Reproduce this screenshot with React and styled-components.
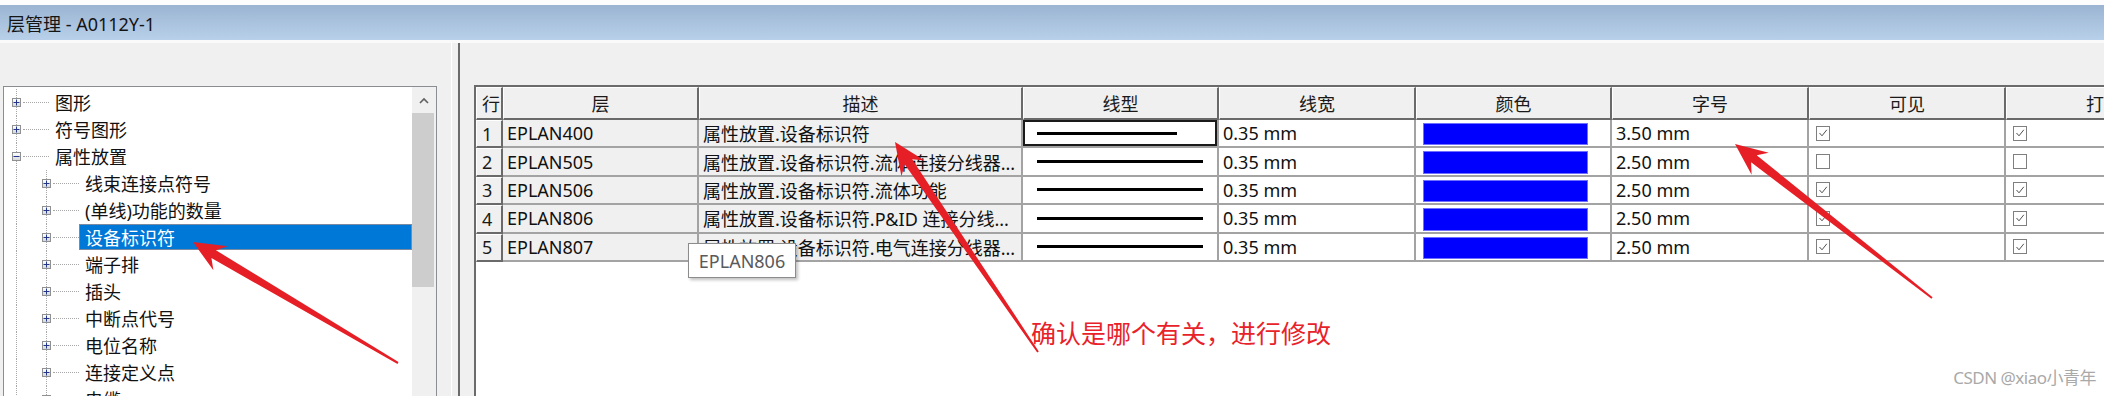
import React from "react";
import styled, { createGlobalStyle } from "styled-components";

const GlobalStyle = createGlobalStyle`
  html, body {
    margin: 0;
    padding: 0;
    background: #f0f0f0;
  }
  body {
    overflow: hidden;
    font-family: "Noto Sans", "Noto Sans CJK SC", sans-serif;
  }
  * {
    box-sizing: border-box;
  }
`;

const Window = styled.div`
  position: relative;
  width: 2104px;
  height: 396px;
  overflow: hidden;
  display: flex;
  flex-direction: column;
  background: #f0f0f0;
  font-family: "Noto Sans", "Noto Sans CJK SC", sans-serif;
  color: #111;
`;

const TopStrip = styled.div`
  flex: none;
  height: 5px;
  background: #fdfdfd;
`;

const TitleBar = styled.div`
  flex: none;
  height: 35px;
  display: flex;
  align-items: center;
  padding-left: 7px;
  background: linear-gradient(#9bb4d2, #b8d0e9);
  font-size: 18px;
  color: #141414;
`;

const TitleGap = styled.div`
  flex: none;
  height: 3px;
  background: #fafafa;
`;

const Body = styled.div`
  flex: 1;
  min-height: 0;
  display: flex;
  overflow: hidden;
`;

const LeftPane = styled.div`
  flex: none;
  width: 452px;
  padding: 43px 14px 0 3px;
  border-right: 1px solid #ffffff;
  overflow: hidden;
`;

const TreeBox = styled.div`
  height: 340px;
  display: flex;
  background: #fff;
  border: 1px solid #8a8d92;
`;

const TreeList = styled.div`
  flex: 1;
  padding-top: 2px;
  overflow: hidden;
`;

const TreeRow = styled.div`
  height: 27px;
  display: flex;
  align-items: stretch;
`;

const Indent = styled.div`
  flex: none;
  width: 30px;
  position: relative;
  &::before {
    content: "";
    position: absolute;
    left: 12px;
    top: 0;
    bottom: 0;
    border-left: 1px dotted #a8a8a8;
  }
`;

const Expander = styled.div`
  flex: none;
  width: 45px;
  position: relative;
  display: flex;
  align-items: center;
  padding-left: 8px;
  &::before {
    content: "";
    position: absolute;
    left: 12px;
    top: 0;
    bottom: 0;
    border-left: 1px dotted #a8a8a8;
  }
`;

const ToggleBox = styled.span`
  position: relative;
  z-index: 1;
  flex: none;
  width: 9px;
  height: 9px;
  border: 1px solid #8f9092;
  background: linear-gradient(#ffffff, #d6d8dc);
  display: flex;
  align-items: center;
  justify-content: center;
`;

const Connector = styled.span`
  flex: 1;
  margin-left: 2px;
  border-top: 1px dotted #a8a8a8;
`;

const TreeLabel = styled.div`
  flex: 1;
  display: flex;
  align-items: center;
  padding: 0 5px;
  margin: 0 0 1px;
  font-size: 18px;
  white-space: nowrap;
  color: ${(p) => (p.$selected ? "#fff" : "#111")};
  background: ${(p) => (p.$selected ? "#0078d7" : "transparent")};
  border: 1px ${(p) => (p.$selected ? "solid #7a8aa0" : "solid transparent")};
`;

const ScrollBar = styled.div`
  flex: none;
  width: 24px;
  display: flex;
  flex-direction: column;
  background: #f0f0f0;
`;

const ScrollButton = styled.div`
  height: 26px;
  display: flex;
  align-items: center;
  justify-content: center;
`;

const ScrollThumb = styled.div`
  height: 174px;
  margin: 0 2px 0 0;
  background: #cdcdcd;
`;

const Splitter = styled.div`
  flex: none;
  width: 8px;
  border-right: 2px solid #6b6b6b;
`;

const RightPane = styled.div`
  flex: 1;
  min-width: 0;
  padding: 42px 0 0 14px;
  overflow: hidden;
`;

const TableBox = styled.div`
  height: 340px;
  background: #fff;
  border-top: 2px solid #6b6b6b;
  border-left: 2px solid #6b6b6b;
  overflow: hidden;
`;

const Grid = styled.div`
  display: grid;
  grid-template-columns: 27px 196px 324px 196px 197px 196px 197px 197px 197px;
  grid-template-rows: 33px repeat(5, 28.4px);
  width: max-content;
  font-size: 18px;
`;

const HeadCell = styled.div`
  display: flex;
  align-items: center;
  justify-content: ${(p) => (p.$left ? "flex-start" : "center")};
  padding-left: ${(p) => (p.$left ? "5px" : "0")};
  background: #f0f0f0;
  border-top: 1px solid #fff;
  border-left: 1px solid #fff;
  border-right: 2px solid #6a6a6a;
  border-bottom: 2px solid #6a6a6a;
  color: #1a1a1a;
  white-space: nowrap;
  overflow: hidden;
`;

const Cell = styled.div`
  display: flex;
  align-items: center;
  padding-left: ${(p) => p.$pad || "4px"};
  background: ${(p) => (p.$shaded ? "#f0f0f0" : "#fff")};
  border-right: 2px solid #a3a3a3;
  border-bottom: 2px solid #a3a3a3;
  white-space: nowrap;
  overflow: hidden;
  color: #111;
  box-shadow: ${(p) => (p.$focused ? "inset 0 0 0 2px #1a1a1a" : "none")};
`;

const LineSample = styled.div`
  height: 3px;
  background: #000;
  width: ${(p) => p.$w}px;
`;

const SwatchCell = styled.div`
  display: flex;
  padding: 3px 22px 1px 7px;
  border-right: 2px solid #a3a3a3;
  border-bottom: 2px solid #a3a3a3;
`;

const Swatch = styled.div`
  flex: 1;
  background: #0000ff;
  border: 1px solid #6f6fff;
`;

const CheckBox = styled.span`
  width: 14px;
  height: 15px;
  border: 1px solid #7f7f7f;
  background: #fff;
  display: flex;
  align-items: center;
  justify-content: center;
`;

const Tooltip = styled.div`
  position: absolute;
  left: 688px;
  top: 243px;
  width: 108px;
  height: 35px;
  display: flex;
  align-items: center;
  justify-content: center;
  background: #fff;
  border: 1px solid #8c8c8c;
  box-shadow: 2px 2px 3px rgba(0, 0, 0, 0.25);
  font-size: 18px;
  color: #5a5a5a;
`;

const Overlay = styled.svg`
  position: absolute;
  left: 0;
  top: 0;
  pointer-events: none;
`;

const Note = styled.div`
  position: absolute;
  left: 1031px;
  top: 318px;
  font-size: 25px;
  line-height: 30px;
  color: #e8222a;
  white-space: nowrap;
`;

const Watermark = styled.div`
  position: absolute;
  right: 8px;
  bottom: 7px;
  font-size: 17px;
  color: #a9a9a9;
  letter-spacing: -0.5px;
  white-space: nowrap;
`;

const tree = [
  { label: "图形", level: 0, open: false },
  { label: "符号图形", level: 0, open: false },
  { label: "属性放置", level: 0, open: true },
  { label: "线束连接点符号", level: 1 },
  { label: "(单线)功能的数量", level: 1 },
  { label: "设备标识符", level: 1, selected: true },
  { label: "端子排", level: 1 },
  { label: "插头", level: 1 },
  { label: "中断点代号", level: 1 },
  { label: "电位名称", level: 1 },
  { label: "连接定义点", level: 1 },
  { label: "电缆", level: 1 },
];

const headers = ["行", "层", "描述", "线型", "线宽", "颜色", "字号", "可见", "打印"];

const rows = [
  { layer: "EPLAN400", desc: "属性放置.设备标识符", size: "3.50 mm", visible: true },
  { layer: "EPLAN505", desc: "属性放置.设备标识符.流体连接分线器...", size: "2.50 mm", visible: false },
  { layer: "EPLAN506", desc: "属性放置.设备标识符.流体功能", size: "2.50 mm", visible: true },
  { layer: "EPLAN806", desc: "属性放置.设备标识符.P&ID 连接分线...", size: "2.50 mm", visible: true },
  { layer: "EPLAN807", desc: "属性放置.设备标识符.电气连接分线器...", size: "2.50 mm", visible: true },
];

const Toggle = ({ open }) => (
  <ToggleBox>
    <svg width="7" height="7" viewBox="0 0 7 7">
      <line x1="0.5" y1="3.5" x2="6.5" y2="3.5" stroke="#23378a" strokeWidth="1" />
      {!open && <line x1="3.5" y1="0.5" x2="3.5" y2="6.5" stroke="#23378a" strokeWidth="1" />}
    </svg>
  </ToggleBox>
);

const Check = ({ on }) => (
  <CheckBox>
    {on && (
      <svg width="10" height="10" viewBox="0 0 10 10">
        <polyline points="1.5,5 4,7.8 8.8,1.8" fill="none" stroke="#505050" strokeWidth="1" />
      </svg>
    )}
  </CheckBox>
);

// red annotation arrow: tapered shaft, swept head
const arrowPoints = (tip, tail, headLen, headHalf) => {
  const dx = tail[0] - tip[0];
  const dy = tail[1] - tip[1];
  const len = Math.hypot(dx, dy);
  const d = [dx / len, dy / len];
  const p = [-d[1], d[0]];
  const at = (t, s) => [tip[0] + d[0] * t + p[0] * s, tip[1] + d[1] * t + p[1] * s];
  const neck = headLen - 8;
  const pts = [
    tip,
    at(headLen, headHalf),
    at(neck, 4.5),
    [tail[0] + p[0] * 1, tail[1] + p[1] * 1],
    [tail[0] - p[0] * 1, tail[1] - p[1] * 1],
    at(neck, -4.5),
    at(headLen, -headHalf),
  ];
  return pts.map((q) => q[0].toFixed(1) + "," + q[1].toFixed(1)).join(" ");
};

const arrows = [
  { tip: [193, 242], tail: [398, 363] },
  { tip: [895, 142], tail: [1038, 352] },
  { tip: [1735, 144], tail: [1932, 298] },
];

const App = () => (
  <Window>
    <GlobalStyle />
    <TopStrip />
    <TitleBar>层管理 - A0112Y-1</TitleBar>
    <TitleGap />
    <Body>
      <LeftPane>
        <TreeBox>
          <TreeList>
            {tree.map((n) => (
              <TreeRow key={n.label}>
                {n.level > 0 && <Indent />}
                <Expander>
                  <Toggle open={n.open} />
                  <Connector />
                </Expander>
                <TreeLabel $selected={n.selected}>{n.label}</TreeLabel>
              </TreeRow>
            ))}
          </TreeList>
          <ScrollBar>
            <ScrollButton>
              <svg width="10" height="7" viewBox="0 0 10 7">
                <polyline points="1,6 5,2 9,6" fill="none" stroke="#606060" strokeWidth="1.6" />
              </svg>
            </ScrollButton>
            <ScrollThumb />
          </ScrollBar>
        </TreeBox>
      </LeftPane>
      <Splitter />
      <RightPane>
        <TableBox>
          <Grid>
            {headers.map((h, i) => (
              <HeadCell key={h} $left={i === 0}>
                {h}
              </HeadCell>
            ))}
            {rows.map((r, i) => (
              <React.Fragment key={r.layer}>
                <HeadCell $left>{i + 1}</HeadCell>
                <Cell $shaded>{r.layer}</Cell>
                <Cell $shaded>{r.desc}</Cell>
                <Cell $pad="14px" $focused={i === 0}>
                  <LineSample $w={i === 0 ? 140 : 166} />
                </Cell>
                <Cell>0.35 mm</Cell>
                <SwatchCell>
                  <Swatch />
                </SwatchCell>
                <Cell>{r.size}</Cell>
                <Cell $pad="7px">
                  <Check on={r.visible} />
                </Cell>
                <Cell $pad="7px">
                  <Check on={r.visible} />
                </Cell>
              </React.Fragment>
            ))}
          </Grid>
        </TableBox>
      </RightPane>
    </Body>
    <Tooltip>EPLAN806</Tooltip>
    <Note>确认是哪个有关，进行修改</Note>
    <Watermark>CSDN @xiao小青年</Watermark>
    <Overlay width="2104" height="396" viewBox="0 0 2104 396">
      {arrows.map((a, i) => (
        <polygon key={i} points={arrowPoints(a.tip, a.tail, 32, 14)} fill="#e61f26" />
      ))}
    </Overlay>
  </Window>
);

export default App;
